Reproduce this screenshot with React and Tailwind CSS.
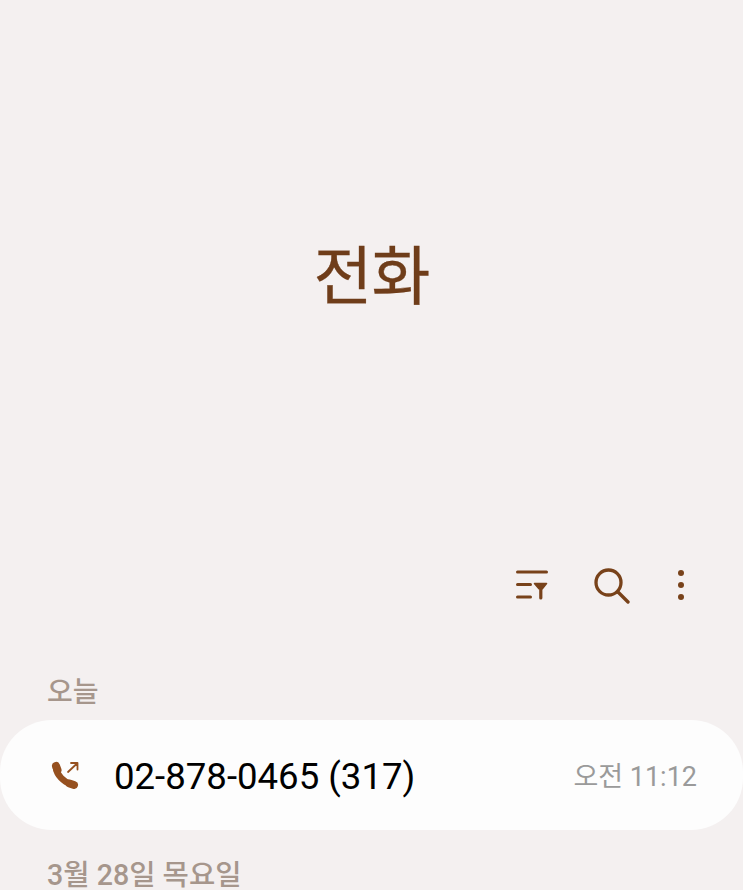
const FONT = "font-['Roboto','Noto_Sans_CJK_KR',sans-serif]";

const FilterIcon = () => (
  <svg width="32" height="30" viewBox="0 0 32 30" fill="none" stroke="#78421a" strokeWidth="3" strokeLinecap="round">
    <path d="M1.500 2h29M1.500 14.500h13M1.500 27h13" />
    <path d="M18.500 13.500h12l-4.200 5.200H23z" fill="#78421a" strokeWidth="1.600" strokeLinejoin="round" />
    <path d="M24.800 18v10" strokeWidth="3.200" />
  </svg>
);

const SearchIcon = () => (
  <svg width="36" height="36" viewBox="0 0 36 36" fill="none" stroke="#78421a" strokeWidth="3.300" strokeLinecap="round">
    <circle cx="14.500" cy="14.500" r="12.500" />
    <path d="M24 24l10 10" />
  </svg>
);

const MoreIcon = () => (
  <svg width="8" height="32" viewBox="0 0 8 32" fill="#78421a">
    <circle cx="4" cy="4" r="3" />
    <circle cx="4" cy="16" r="3" />
    <circle cx="4" cy="28" r="3" />
  </svg>
);

const OutgoingCallIcon = () => (
  <svg width="30" height="30" viewBox="0 0 30 30" fill="none" stroke="#96501f" strokeLinecap="round">
    <path d="M6 8C7 15 13.500 22 21 24" strokeWidth="6.500" />
    <path d="M6 6L7.500 10M19.500 23.500L24 25" strokeWidth="8" />
    <path d="M18 12L27 3.500M21 3h6.500v6.500" strokeWidth="1.800" strokeLinejoin="round" />
  </svg>
);

const App = () => {
  return (
    <div className={`${FONT} w-[743px] h-[890px] overflow-hidden bg-[#f4f0f0]`}>
      {/* Big title */}
      <div className="h-[556px] flex items-center justify-center">
        <h1 className="text-[64px] leading-none tracking-[-1px] text-[#6f3d1a] [-webkit-text-stroke:0.3px_#6f3d1a]">전화</h1>
      </div>

      {/* Toolbar */}
      <div className="h-[58px] flex items-center justify-end pr-[58px]">
        <div className="mr-[46px]"><FilterIcon /></div>
        <div className="mr-[47px] mt-[2px]"><SearchIcon /></div>
        <MoreIcon />
      </div>

      <div className="h-[106px] pt-[61px] pl-[47px]">
        <p className="text-[28px] leading-[36px] font-medium text-[#a6968c]">오늘</p>
      </div>

      {/* Call row */}
      <div className="h-[110px] rounded-[52px] bg-[#fdfdfd] flex items-center pl-[50px] pr-[46px]">
        <OutgoingCallIcon />
        <span className="ml-[34px] pt-[4px] text-[36.600px] text-black">02-878-0465 (317)</span>
        <span className="ml-auto pt-[4px] text-[27px] text-[#9a9a9a]">오전 11:12</span>
      </div>

      <p className="mt-[27px] pl-[47px] text-[28.600px] leading-[36px] font-medium text-[#a6968c]">3월 28일 목요일</p>
    </div>
  );
};

export default App;
